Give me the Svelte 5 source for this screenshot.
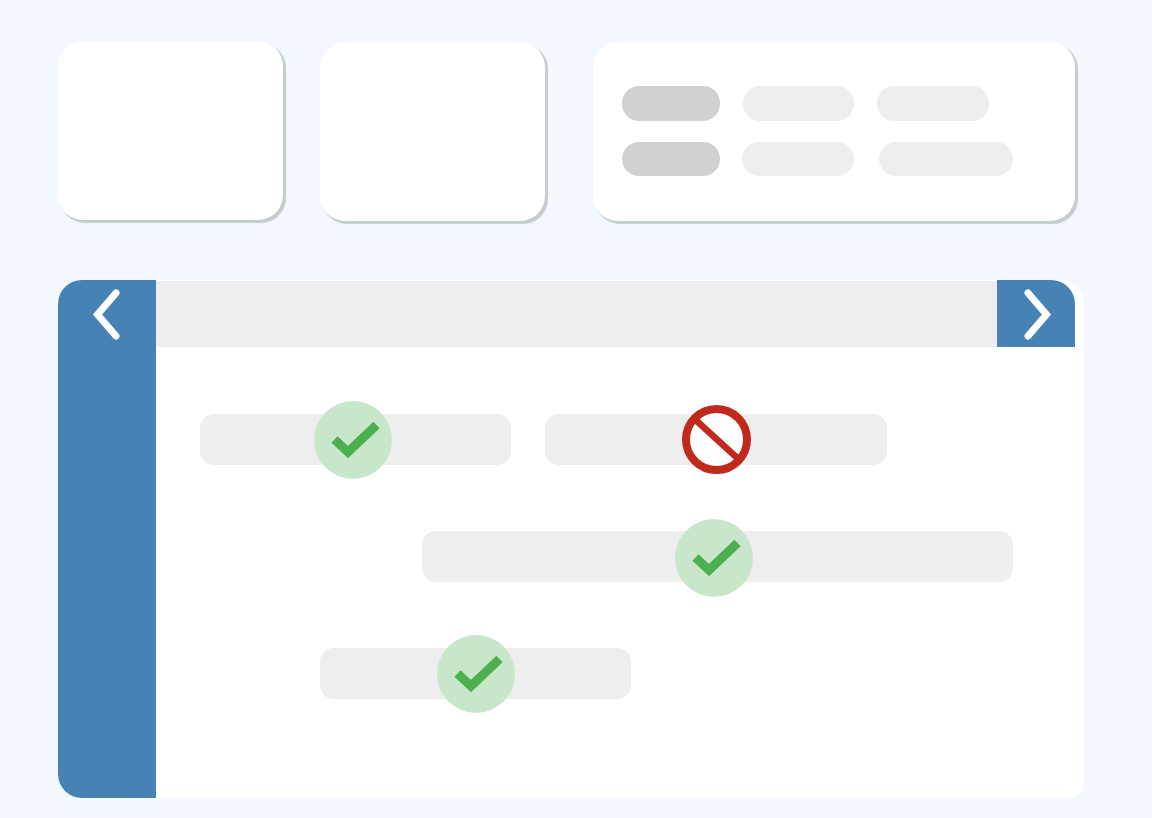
<script>
  const rows = [
    [
      { cls: 'w311', kind: 'ok', badge: 'b1' },
      { cls: 'w342', kind: 'no', badge: 'b2' }
    ],
    [{ cls: 'w591', kind: 'ok', badge: 'b3' }],
    [{ cls: 'w311', kind: 'ok', badge: 'b4' }]
  ];
  const rowClass = ['r1', 'r2', 'r3'];
</script>

<div class="page">
  <section class="cards">
    <div class="card small first"></div>
    <div class="card small second"></div>
    <div class="card wide">
      <div class="line l1">
        <span class="pill dark"></span>
        <span class="pill p1a"></span>
        <span class="pill p1b"></span>
      </div>
      <div class="line l2">
        <span class="pill dark"></span>
        <span class="pill p2a"></span>
        <span class="pill p2b"></span>
      </div>
    </div>
  </section>

  <section class="panel">
    <aside class="side">
      <svg class="chev" width="98" height="67" viewBox="0 0 98 67" aria-hidden="true">
        <path d="M58 13 L39.5 34.5 L58 56" />
      </svg>
    </aside>
    <div class="main">
      <header class="head">
        <div class="strip"></div>
        <div class="next">
          <svg class="chev" width="78" height="67" viewBox="0 0 78 67" aria-hidden="true">
            <path d="M31 13 L49.5 34.5 L31 56" />
          </svg>
        </div>
      </header>
      <div class="body">
        {#each rows as row, i}
          <div class="row {rowClass[i]}">
            {#each row as item}
              <div class="bar {item.cls}">
                <span class="badge {item.badge}">
                  {#if item.kind === 'ok'}
                    <svg width="78" height="78" viewBox="0 0 78 78" aria-hidden="true">
                      <circle cx="39" cy="39" r="39" fill="#c8e6c9" />
                      <path d="M20.5 38.5 L34 51 L62.5 24" fill="none" stroke="#4caf50" stroke-width="9" />
                    </svg>
                  {:else}
                    <svg width="69" height="69" viewBox="0 0 69 69" aria-hidden="true">
                      <circle cx="34.5" cy="34.5" r="30.5" fill="#fff" stroke="#bf2a1c" stroke-width="8" />
                      <path d="M12 13.5 L58 55.5" fill="none" stroke="#bf2a1c" stroke-width="6.5" />
                    </svg>
                  {/if}
                </span>
              </div>
            {/each}
          </div>
        {/each}
      </div>
    </div>
  </section>
</div>

<style>
  :global(body) {
    margin: 0;
    background: #f3f8ff;
  }
  .page {
    width: 1152px;
    height: 818px;
    padding: 41px 0 0 58px;
    box-sizing: border-box;
    overflow: hidden;
  }
  .cards {
    display: flex;
    align-items: flex-start;
    height: 180px;
  }
  .card {
    height: 179px;
    background: #fff;
    border-radius: 25px;
    box-shadow: 2.5px 2.5px 1px #c5cccb;
    box-sizing: border-box;
  }
  .small {
    width: 225px;
  }
  .second {
    margin: 1px 0 0 37px;
  }
  .wide {
    width: 482px;
    margin: 1px 0 0 48px;
    padding: 44px 0 0 29px;
  }
  .line {
    display: flex;
  }
  .l1 {
    height: 35px;
    margin-bottom: 21px;
  }
  .l2 {
    height: 34px;
  }
  .pill {
    display: block;
    height: 100%;
    border-radius: 17px;
    background: #eeeeee;
  }
  .dark {
    width: 98px;
    background: #cfd1d3;
  }
  .p1a {
    width: 111px;
    margin-left: 23px;
  }
  .p1b {
    width: 112px;
    margin-left: 23px;
  }
  .p2a {
    width: 112px;
    margin-left: 22px;
  }
  .p2b {
    width: 134px;
    margin-left: 25px;
  }
  .panel {
    display: flex;
    width: 1026px;
    height: 518px;
    margin-top: 59px;
    background: #fff;
    border-radius: 24px 22px 14px 24px;
  }
  .side {
    width: 98px;
    flex: none;
    background: #4682b4;
    border-radius: 24px 0 0 24px;
  }
  .chev {
    display: block;
  }
  .chev path {
    fill: none;
    stroke: #fff;
    stroke-width: 7;
    stroke-linecap: round;
    stroke-linejoin: miter;
  }
  .main {
    flex: 1;
    min-width: 0;
  }
  .head {
    display: flex;
    height: 67px;
    margin-right: 9px;
  }
  .strip {
    flex: 1;
    margin-top: 1px;
    background: #eeeeee;
  }
  .next {
    width: 78px;
    flex: none;
    background: #4682b4;
    border-radius: 0 24px 0 0;
  }
  .body {
    padding-top: 67px;
  }
  .row {
    display: flex;
    height: 51px;
    margin-bottom: 66px;
  }
  .r1 {
    margin-left: 44px;
    gap: 34px;
  }
  .r2 {
    margin-left: 266px;
  }
  .r3 {
    margin-left: 164px;
  }
  .bar {
    position: relative;
    height: 51px;
    background: #eeeeee;
    border-radius: 14px;
  }
  .w311 {
    width: 311px;
  }
  .w342 {
    width: 342px;
  }
  .w591 {
    width: 591px;
  }
  .badge {
    position: absolute;
    display: block;
    line-height: 0;
  }
  .b1 {
    left: 114px;
    top: -13px;
  }
  .b2 {
    left: 137px;
    top: -9px;
  }
  .b3 {
    left: 253px;
    top: -12px;
  }
  .b4 {
    left: 117px;
    top: -13px;
  }
</style>
